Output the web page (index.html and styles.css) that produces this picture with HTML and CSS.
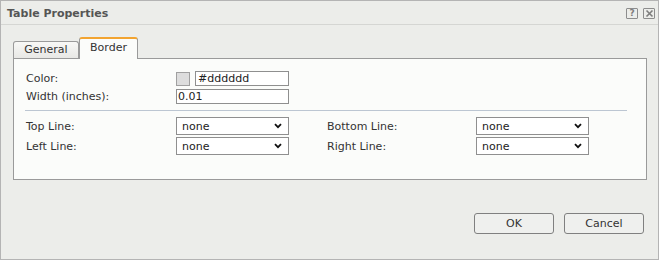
FILE: index.html
```html
<!DOCTYPE html>
<html lang="en">
<head>
    <meta charset="UTF-8">
    <title>Table Properties</title>
    <link rel="stylesheet" href="styles.css">
</head>
<body>

    <div class="dialog">
        <!-- title bar -->
        <div class="titlebar">
            <span class="title">Table Properties</span>
            <div class="tools">
                <span class="tool-btn help">?</span>
                <span class="tool-btn">
                    <svg width="9" height="9" viewBox="0 0 9 9">
                        <path d="M1.5 1.5 L7.5 7.5 M7.5 1.5 L1.5 7.5" stroke="#7d7d7d" stroke-width="1.6" fill="none"/>
                    </svg>
                </span>
            </div>
        </div>

        <!-- tabs -->
        <div class="tabs">
            <div class="tab">General</div>
            <div class="tab active">Border</div>
        </div>

        <div class="panel">
            <div class="grid size-grid">
                <label>Color:</label>
                <div class="color-field">
                    <span class="swatch"></span>
                    <input class="text-input color-input" type="text" value="#dddddd">
                </div>
                <label>Width (inches):</label>
                <input class="text-input" type="text" value="0.01">
            </div>

            <div class="sep"></div>

            <div class="grid line-grid">
                <label>Top Line:</label>
                <div class="select"><span>none</span><svg class="chev" width="8" height="6" viewBox="0 0 8 6"><path d="M1 1.2 L4 4.2 L7 1.2" stroke="#111" stroke-width="1.8" fill="none"/></svg></div>
                <label>Bottom Line:</label>
                <div class="select"><span>none</span><svg class="chev" width="8" height="6" viewBox="0 0 8 6"><path d="M1 1.2 L4 4.2 L7 1.2" stroke="#111" stroke-width="1.8" fill="none"/></svg></div>
                <label>Left Line:</label>
                <div class="select"><span>none</span><svg class="chev" width="8" height="6" viewBox="0 0 8 6"><path d="M1 1.2 L4 4.2 L7 1.2" stroke="#111" stroke-width="1.8" fill="none"/></svg></div>
                <label>Right Line:</label>
                <div class="select"><span>none</span><svg class="chev" width="8" height="6" viewBox="0 0 8 6"><path d="M1 1.2 L4 4.2 L7 1.2" stroke="#111" stroke-width="1.8" fill="none"/></svg></div>
            </div>
        </div>

        <!-- buttons -->
        <div class="footer">
            <button class="btn">OK</button>
            <button class="btn">Cancel</button>
        </div>
    </div>

</body>
</html>
```

FILE: styles.css
```css
body {
    margin: 0;
    padding: 0;
    background-color: #ffffff;
    font-family: "DejaVu Sans", Verdana, sans-serif;
    font-size: 11px;
    color: #333333;
}

.dialog {
    box-sizing: border-box;
    width: 659px;
    height: 260px;
    border: 1px solid #b4b4b4;
    background-color: #ecedea;
}

/* title bar */
.titlebar {
    height: 23px;
    border-bottom: 1px solid #d5d6d3;
    display: flex;
    align-items: center;
    justify-content: space-between;
    padding: 0 3px 0 6px;
}

.title {
    font-weight: bold;
    color: #555555;
    font-size: 11px;
    padding-top: 1px;
}

.tools {
    display: flex;
    gap: 5px;
    padding-top: 2px;
}

.tool-btn {
    box-sizing: border-box;
    width: 12px;
    height: 11px;
    border: 1px solid #8d8d8d;
    border-radius: 1px;
    display: flex;
    align-items: center;
    justify-content: center;
}

.tool-btn.help {
    font-weight: bold;
    font-size: 9px;
    color: #7d7d7d;
    line-height: 9px;
}

/* tabs */
.tabs {
    display: flex;
    align-items: flex-end;
    height: 33px;
    padding-left: 12px;
    box-sizing: border-box;
}

.tab {
    box-sizing: border-box;
    width: 66px;
    height: 17px;
    border: 1px solid #9a9a9a;
    border-bottom: none;
    border-radius: 3px 3px 0 0;
    background: linear-gradient(to bottom, #f8f8f6, #e8e8e5);
    color: #333333;
    text-align: center;
    line-height: 16px;
}

.tab.active {
    position: relative;
    z-index: 1;
    width: 59px;
    height: 22px;
    margin-bottom: -1px;
    border-top: 2px solid #f2a431;
    background: #fbfcfa;
    line-height: 17px;
}

/* panel */
.panel {
    box-sizing: border-box;
    width: 634px;
    height: 122px;
    margin-left: 12px;
    border: 1px solid #9a9a9a;
    background-color: #fbfcfa;
    padding: 12px 0 0 12px;
}

.grid {
    display: grid;
    align-items: center;
}

.size-grid {
    grid-template-columns: 150px 113px;
    row-gap: 3px;
}

.line-grid {
    grid-template-columns: 150px 151px 149px 113px;
    row-gap: 2px;
}

.color-field {
    display: flex;
    align-items: center;
    gap: 5px;
}

.swatch {
    box-sizing: border-box;
    width: 14px;
    height: 14px;
    border: 1px solid #a0a0a0;
    background-color: #dddddd;
}

.text-input {
    box-sizing: border-box;
    width: 113px;
    height: 15px;
    margin: 0;
    border: 1px solid #8f8f8f;
    background-color: #ffffff;
    padding: 0 1px;
    font-family: "DejaVu Sans", Verdana, sans-serif;
    font-size: 11px;
    color: #222222;
    outline: none;
}

.color-input {
    width: 94px;
    padding-left: 2px;
}

.sep {
    height: 1px;
    width: 602px;
    margin: 6px 0 6px -1px;
    background-color: #bcc6d2;
}

.select {
    box-sizing: border-box;
    width: 113px;
    height: 18px;
    border: 1px solid #8f8f8f;
    background-color: #ffffff;
    display: flex;
    align-items: center;
    justify-content: space-between;
    padding: 0 6px 0 5px;
    color: #222222;
}

.chev {
    display: block;
}

/* buttons */
.footer {
    display: flex;
    justify-content: flex-end;
    gap: 10px;
    margin-top: 33px;
    padding-right: 14px;
}

.btn {
    box-sizing: border-box;
    width: 80px;
    height: 21px;
    border: 1px solid #808080;
    border-radius: 3px;
    background-color: #eff0ee;
    font-family: "DejaVu Sans", Verdana, sans-serif;
    font-size: 11px;
    color: #333333;
    padding: 0;
}
```
